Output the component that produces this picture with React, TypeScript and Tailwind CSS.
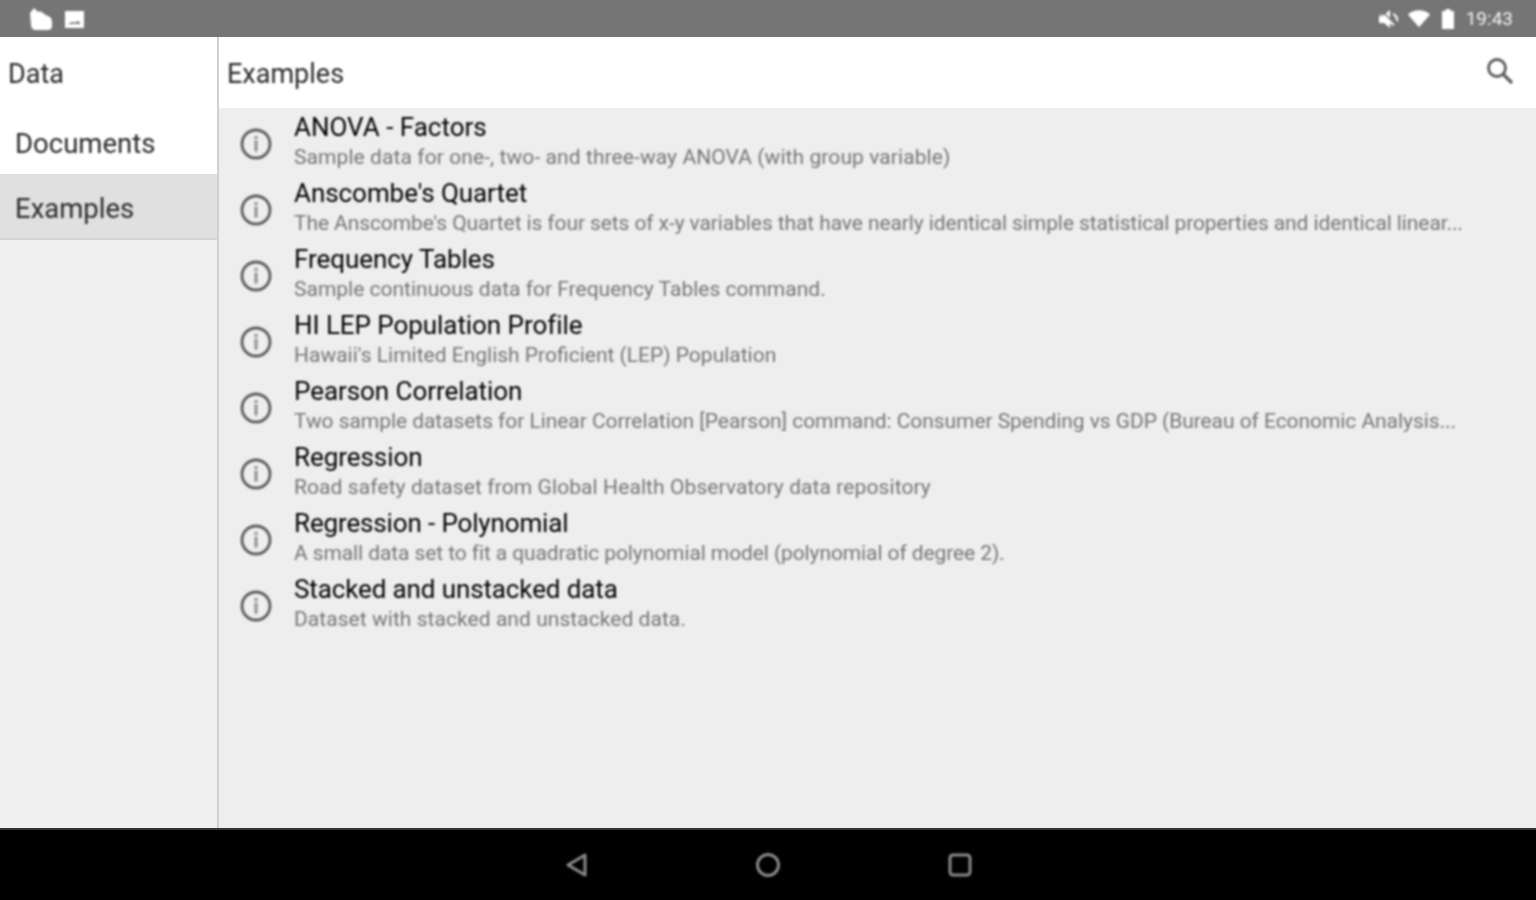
import React from "react";

const rows = [
  ["ANOVA - Factors", "Sample data for one-, two- and three-way ANOVA (with group variable)", "tracking-[0.08px]", "tracking-[0px]"],
  ["Anscombe's Quartet", "The Anscombe's Quartet is four sets of x-y variables that have nearly identical simple statistical properties and identical linear...", "tracking-[-0.1px]", "tracking-[-0.06px]"],
  ["Frequency Tables", "Sample continuous data for Frequency Tables command.", "tracking-[0px]", "tracking-[-0.06px]"],
  ["HI LEP Population Profile", "Hawaii's Limited English Proficient (LEP) Population", "tracking-[0px]", "tracking-[-0.06px]"],
  ["Pearson Correlation", "Two sample datasets for Linear Correlation [Pearson] command: Consumer Spending vs GDP (Bureau of Economic Analysis...", "tracking-[-0.06px]", "tracking-[-0.06px]"],
  ["Regression", "Road safety dataset from Global Health Observatory data repository", "tracking-[0.09px]", "tracking-[-0.06px]"],
  ["Regression - Polynomial", "A small data set to fit a quadratic polynomial model (polynomial of degree 2).", "tracking-[-0.1px]", "tracking-[-0.14px]"],
  ["Stacked and unstacked data", "Dataset with stacked and unstacked data.", "tracking-[0.05px]", "tracking-[-0.12px]"],
];

function Info() {
  return (
    <svg width="32" height="32" viewBox="0 0 32 32" fill="none" className="shrink-0 blur-[0.8px] ml-[1px]">
      <circle cx="16" cy="16" r="14" stroke="#5c5c5c" strokeWidth="2.8" />
      <rect x="14.5" y="8" width="3" height="3" fill="#8f8f8f" />
      <rect x="14.5" y="12.5" width="3" height="11" fill="#8f8f8f" />
    </svg>
  );
}

export default function App() {
  return (
    <div className="w-[1536px] h-[900px] flex flex-col overflow-hidden bg-white font-['Roboto',sans-serif]">
      <div className="h-[37px] bg-[#757575] flex items-center justify-between pl-[28px] pr-[23px] shrink-0">
        <div className="flex items-center gap-[10px] blur-[0.8px]">
          <svg width="26" height="24" viewBox="0 0 26 24" fill="#ffffff">
            <path d="M2 6 L6 1 L10 5 C12 4 15 5 16 7 L20 9 C23 10 24 12 24 15 L24 19 C24 22 22 23 20 23 L8 23 C5 23 3 21 3 18 Z" />
          </svg>
          <svg width="22" height="20" viewBox="0 0 22 20" fill="#ffffff">
            <path d="M1 2 H20 V19 H1 Z M5 15 H16 V13.5 L13.5 12 L11 14 L9 13 L5 14 Z" fillRule="evenodd" />
          </svg>
        </div>
        <div className="flex items-center blur-[0.8px]">
          <svg width="24" height="24" viewBox="0 0 24 24" fill="#ffffff" className="mr-[6px]">
            <path d="M1 8 H6 L12 3 V12 L17 17 L15 19 L3 7 Z M1 9 H7 L12 14 V21 L6 16 H1 Z" />
            <path d="M15 6 C18 7 21 10 20 15 L18 13 C18 11 17 9 15 8 Z" />
            <path d="M3 3 L21 21" stroke="#757575" strokeWidth="1.5" />
          </svg>
          <svg width="24" height="20" viewBox="0 0 26 20" fill="#ffffff" className="mr-[10px] ml-[-1px]">
            <path d="M1 5 C8 -1 18 -1 25 5 L13 19 Z" />
          </svg>
          <svg width="14" height="22" viewBox="0 0 14 22" fill="#ffffff" className="mr-[11px]">
            <path d="M4.5 1 H9.5 V3 H13 V21 H1 V3 H4.5 Z" />
          </svg>
          <span className="text-[19px] leading-none text-[#f4f4f4]">19:43</span>
        </div>
      </div>

      <div className="flex-1 flex min-h-0">
        <aside className="w-[219px] shrink-0 flex flex-col bg-[#f0f0f0] border-r-2 border-[#d0d0d0]">
          <div className="h-[71px] bg-white flex items-center pl-[8px] pt-[3px] text-[27px] text-[#2a2a2a]"><span className="blur-[0.8px]">Data</span></div>
          <div className="h-[66px] bg-white flex items-center pl-[15px] pt-[5px] text-[27.5px] text-[#2a2a2a]"><span className="blur-[0.8px]">Documents</span></div>
          <div className="h-[66px] bg-[#e0e0e0] flex items-center pl-[15px] pt-[5px] text-[27.5px] text-[#2a2a2a] border-b-2 border-[#d4d4d4]"><span className="blur-[0.8px]">Examples</span></div>
        </aside>
        <main className="flex-1 flex flex-col min-w-0 bg-[#eeeeee]">
          <div className="h-[71px] bg-white flex items-center justify-between pl-[8px] pr-[21px] shrink-0">
            <span className="text-[27px] pt-[3px] text-[#2a2a2a] blur-[0.8px]">Examples</span>
            <svg width="30" height="30" viewBox="0 0 30 30" fill="none" stroke="#5c5c5c" className="mt-[-3px] blur-[0.8px]">
              <circle cx="12" cy="12" r="8.5" strokeWidth="2.8" />
              <path d="M18 18 L27 27" strokeWidth="3.2" />
            </svg>
          </div>
          <div className="pt-[3px] flex flex-col">
            {rows.map(([t, s, track, titleTrack]) => (
              <div key={t} className="h-[66px] flex items-center pl-[20px]">
                <Info />
                <div className="ml-[22px] pb-[6px] flex flex-col min-w-0 blur-[0.8px]">
                  <div className={`text-[26px] leading-[32px] text-[#000000] whitespace-nowrap ${titleTrack}`}>{t}</div>
                  <div className={`text-[21px] leading-[28px] text-[#757575] whitespace-nowrap ${track}`}>{s}</div>
                </div>
              </div>
            ))}
          </div>
        </main>
      </div>

      <div className="h-[72px] bg-black shrink-0 flex items-center justify-center gap-[156px] border-t-2 border-[#333]">
        <svg width="36" height="36" viewBox="0 0 36 36" fill="none" stroke="#8a8a8a" strokeWidth="3" strokeLinejoin="round" className="blur-[0.8px]">
          <path d="M27 8 V28 L10 18 Z" />
        </svg>
        <svg width="36" height="36" viewBox="0 0 36 36" fill="none" stroke="#8a8a8a" strokeWidth="3" className="blur-[0.8px]">
          <circle cx="18" cy="18" r="10.5" />
        </svg>
        <svg width="36" height="36" viewBox="0 0 36 36" fill="none" stroke="#8a8a8a" strokeWidth="3" className="blur-[0.8px]">
          <rect x="8" y="8" width="20" height="20" rx="3" />
        </svg>
      </div>
    </div>
  );
}
